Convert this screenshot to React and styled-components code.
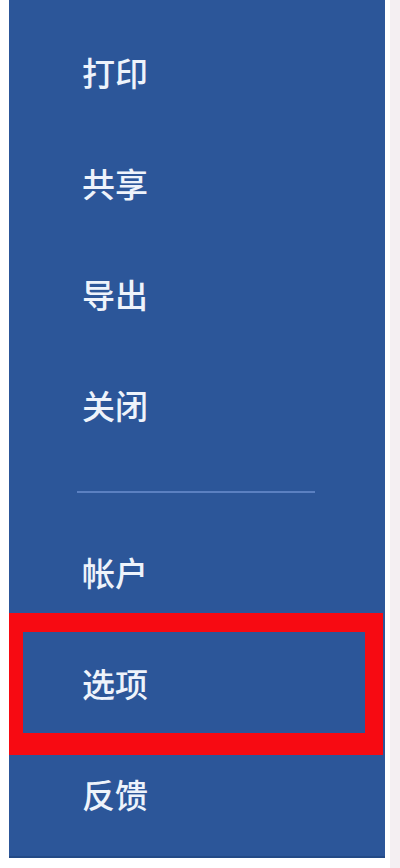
import React from "react";
import styled, { createGlobalStyle } from "styled-components";

const GlobalStyle = createGlobalStyle`
  html, body {
    margin: 0;
    padding: 0;
    background: #ffffff;
  }
  body {
    font-family: "Noto Sans CJK SC", "Noto Sans", sans-serif;
  }
`;

const Page = styled.div`
  display: flex;
  width: 400px;
  height: 868px;
  overflow: hidden;
`;

const Backstage = styled.nav`
  width: 376px;
  height: 858px;
  margin-left: 9px;
  box-sizing: border-box;
  padding-top: 17px;
  background: #2c5699;
  border-bottom: 2px solid #234a86;
  display: flex;
  flex-direction: column;
`;

const Gutter = styled.div`
  width: 10px;
  margin-left: 5px;
  height: 100%;
  background: #f4eff2;
`;

const Item = styled.div`
  position: relative;
  height: 111px;
  flex: none;
  display: flex;
  align-items: center;
  padding-left: 73px;
  color: #eef3fb;
  font-size: 33px;
  font-weight: 500;
  line-height: 1;
`;

const Highlight = styled.span`
  position: absolute;
  top: -15px;
  bottom: -16px;
  left: 0;
  right: 2px;
  border-style: solid;
  border-color: #f70a12;
  border-width: 19px 18px 22px 14px;
  pointer-events: none;
`;

const Divider = styled.hr`
  flex: none;
  width: 238px;
  height: 2px;
  margin: 30px 0 24px 68px;
  border: 0;
  background: #5b80c1;
`;

const topItems = ["打印", "共享", "导出", "关闭"];
const bottomItems = [
  { label: "帐户" },
  { label: "选项", marked: true },
  { label: "反馈" },
];

export default function App() {
  return (
    <>
      <GlobalStyle />
      <Page>
        <Backstage>
          {topItems.map((label) => (
            <Item key={label}>{label}</Item>
          ))}
          <Divider />
          {bottomItems.map(({ label, marked }) => (
            <Item key={label}>
              {label}
              {marked && <Highlight />}
            </Item>
          ))}
        </Backstage>
        <Gutter />
      </Page>
    </>
  );
}
